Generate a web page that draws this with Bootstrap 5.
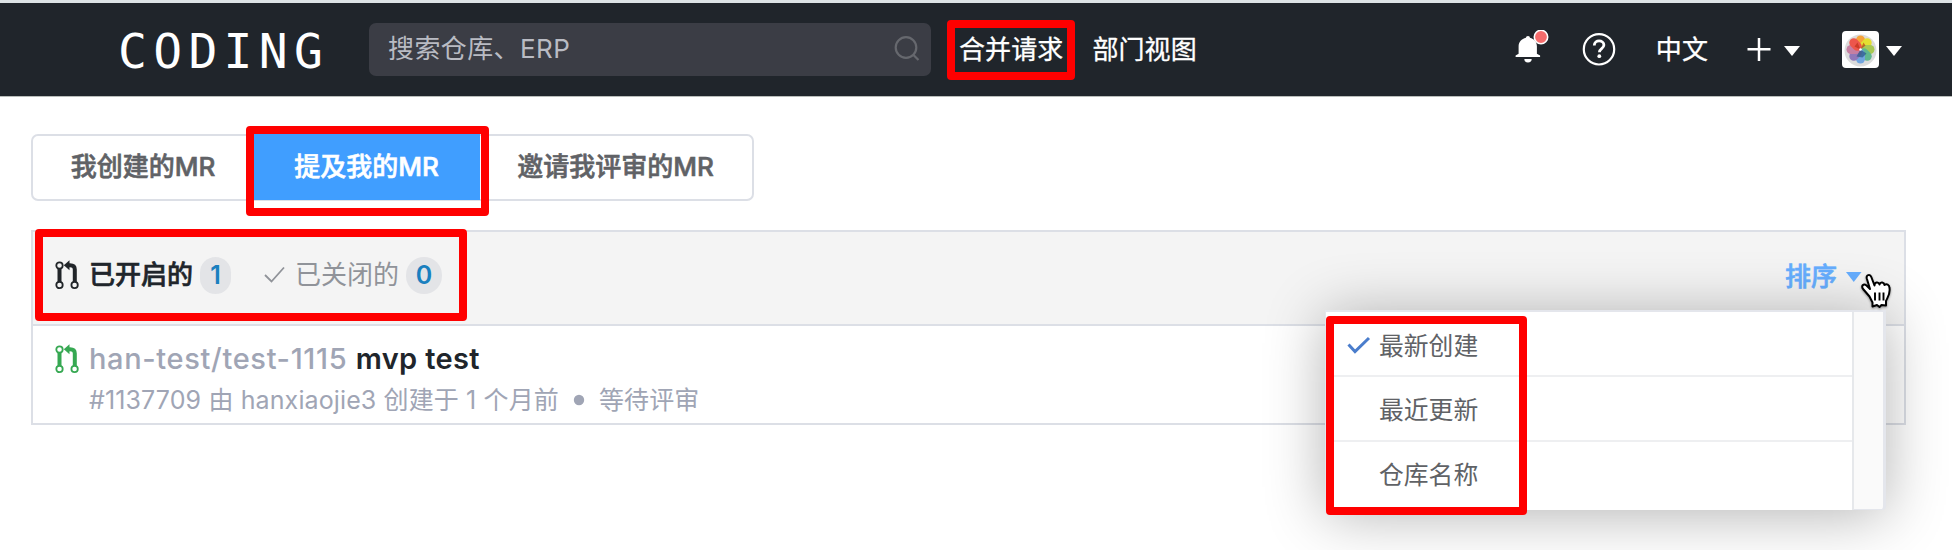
<!DOCTYPE html>
<html lang="zh-CN">
<head>
<meta charset="utf-8">
<title>合并请求 - CODING</title>
<link rel="stylesheet" href="https://cdn.jsdelivr.net/npm/bootstrap@5.3.0/dist/css/bootstrap.min.css">
<style>
  body { font-family: Inter, "Noto Sans CJK SC", sans-serif; font-size: 26px; line-height: 38px; color: #606266; height: 550px; overflow: hidden; letter-spacing: 0; }
  svg { display: block; flex: none; }
  .topbar { height: 97px; background: #20252b; border-top: 3px solid #dde3e6; border-bottom: 1px solid #b9bdba; color: #fff; padding: 0 50px 0 117px; }
  .topbar a { color: #fff; text-decoration: none; white-space: nowrap; -webkit-text-stroke: .3px; letter-spacing: .1px; }
  .brand { font-family: "DejaVu Sans Mono", monospace; font-size: 48px; letter-spacing: 6.3px; width: 252px; line-height: 60px; padding: 3px 0 0 1px; }
  .search-box { width: 562px; height: 53px; margin-bottom: 1px; background: #3b3d45; border-radius: 7px; color: #b9bbc3; padding: 0 11px 0 19px; letter-spacing: .4px; }
  .marked { position: relative; }
  .marked::after { content: ""; position: absolute; border: 8px solid #f00; border-radius: 4px; inset: var(--mark); pointer-events: none; z-index: 5; }
  .avatar { width: 37px; height: 37px; background: #fff; border-radius: 4px; }
  .medium { font-weight: 500; -webkit-text-stroke: .6px; }
  .tabs { width: 723px; height: 67px; margin: 37px 0 0 31px; border: 2px solid #dcdfe6; border-radius: 7px; }
  .tabs > div { height: 66px; margin-top: -2px; padding-right: 1px; display: flex; align-items: center; justify-content: center; white-space: nowrap; }
  .tabs .current { background: #409eff; color: #fff; }
  .panel { width: 1875px; height: 195px; margin: 29px 0 0 31px; border: 2px solid #dcdfe6; position: relative; }
  .panel-top { height: 94px; background: #f4f4f4; border-bottom: 2px solid #dcdfe6; }
  .state-group { width: 432px; height: 92px; margin: -3px 0 0 2px; padding: 0 0 0 20px; --mark: 0; }
  .count { background: #e3e4e7; color: #1a80bf; font-weight: 600; font-size: 25px; height: 37px; border-radius: 19px; line-height: 37px; text-align: center; }
  .mr-title { font-size: 29px; font-weight: 500; line-height: 36px; color: #a0a5b5; letter-spacing: .65px; }
  .mr-title b { font-weight: 600; color: #20252b; letter-spacing: .35px; }
  .mr-meta { font-size: 25px; line-height: 34px; color: #a0a5b5; white-space: nowrap; letter-spacing: .12px; }
  .sort { color: #66aeff; }
  .sort-menu { position: absolute; left: 1292px; top: 78px; width: 561px; height: 200px; background: #fafafa; border: 2px solid #e4e6ec; border-width: 2px 3px 1px 1px; box-shadow: 0 5px 60px rgba(0,0,0,.3); border-radius: 0 0 4px 0; }
  .sort-list { width: 528px; background: #fff; border-right: 2px solid #e6e8eb; --mark: 4px 325px -5px 0; font-size: 24.8px; }
  .sort-list > div { height: 64.6px; padding: 4px 0 0 21px; }
  .sort-list > div:first-child { height: 63px; }
  .sort-list > div:last-child { height: 70px; padding-bottom: 5px; }
  .sort-list > div + div { border-top: 2px solid #eeeff1; }
  .pointer { position: absolute; left: 1824px; top: 40px; z-index: 6; filter: drop-shadow(0 1px 1px rgba(0,0,0,.4)); }
</style>
</head>
<body class="bg-white">
<svg width="0" height="0" class="position-absolute">
  <symbol id="pr" viewBox="0 0 24 30">
    <g fill="none" stroke="currentColor">
      <circle cx="4.5" cy="5.5" r="3.2" stroke-width="1.8"/><circle cx="4.5" cy="25" r="3.2" stroke-width="1.8"/><circle cx="19.6" cy="25" r="3.2" stroke-width="1.8"/>
      <path d="M4.5 8.5v13.5M19.8 22V9.5Q19.8 5.2 15 5.2H13" stroke-width="4"/>
    </g>
    <path d="M8.8 5.2 14.5.3v10z" fill="currentColor"/>
  </symbol>
</svg>

<header class="topbar d-flex align-items-center">
  <div class="brand">CODING</div>
  <div class="search-box d-flex align-items-center justify-content-between">
    <span>搜索仓库、ERP</span>
    <svg width="26" height="26" viewBox="0 0 26 26" fill="none" stroke="#66686e" stroke-width="2.2"><circle cx="12" cy="11.5" r="10.3"/><path d="M19 18.5l5.5 5.5"/></svg>
  </div>
  <a href="#" class="marked" style="--mark:-11px -12px -11px -12px; margin-left:28px">合并请求</a>
  <a href="#" style="margin-left:29px">部门视图</a>
  <div class="d-flex align-items-center ms-auto">
    <svg width="34" height="38" viewBox="0 0 34 38" style="margin-bottom:2px"><path d="M13 6c1.200 0 1.900.8 1.900 1.800 4.300 1 7 4.200 7 8.400v7.500l3.200 1.900v1.300H.6v-1.300l3-1.900v-7.500c0-4.200 3-7.400 7.400-8.400 0-1 .8-1.800 2-1.800z" fill="#fff"/><path d="M9.300 29h7.400a3.700 3.500 0 0 1-7.400 0z" fill="#fff"/><circle cx="26" cy="7.500" r="6.700" fill="#f56c6c" stroke="#fff" stroke-width="1.600" transform="translate(0 -.500)"/></svg>
    <svg style="margin-left:33px" width="34" height="34" viewBox="0 0 34 34" fill="none" stroke="#fff"><circle cx="17" cy="16.300" r="15.200" stroke-width="2.200"/><path d="M12.300 12.500c0-6.200 9.600-5.800 9.600-.4 0 3.600-4.500 3.500-4.500 7.200" stroke-width="2.800"/><circle cx="17.300" cy="23.200" r="1.900" fill="#fff" stroke="none"/></svg>
    <a href="#" style="margin-left:40px">中文</a>
    <svg style="margin-left:39px" width="24" height="24" viewBox="0 0 24 24" stroke="#fff" stroke-width="2.500"><path d="M12 0v23M.500 11.300h23"/></svg>
    <svg style="margin:2px 0 0 13px" width="16" height="10"><path d="M0 0h16L8 10z" fill="#fff"/></svg>
    <div class="avatar d-flex align-items-center justify-content-center" style="margin-left:42px">
      <svg width="35" height="35" viewBox="-17.500 -17.500 35 35"><circle cy="1" r="16" fill="#dcdcdc"/><g opacity=".86">
        <rect x="-4.500" y="-14" width="9" height="14" rx="4.500" fill="#fb9a20"/>
        <rect x="-4.500" y="-14" width="9" height="14" rx="4.500" fill="#e6e016" transform="rotate(45)"/>
        <rect x="-4.500" y="-14" width="9" height="14" rx="4.500" fill="#a0c63d" transform="rotate(90)"/>
        <rect x="-4.500" y="-14" width="9" height="14" rx="4.500" fill="#4bb283" transform="rotate(135)"/>
        <rect x="-4.500" y="-14" width="9" height="14" rx="4.500" fill="#609de0" transform="rotate(180)"/>
        <rect x="-4.500" y="-14" width="9" height="14" rx="4.500" fill="#8468b4" transform="rotate(225)"/>
        <rect x="-4.500" y="-14" width="9" height="14" rx="4.500" fill="#c37099" transform="rotate(270)"/>
        <rect x="-4.500" y="-14" width="9" height="14" rx="4.500" fill="#f04135" transform="rotate(315)"/></g>
        <path d="M0 0-6-3-3-7zM0 0 3-7 5-4z" fill="#b52b10" opacity=".6"/><path d="M0 0 6 4 2 8-4 7z" fill="#285984" opacity=".7"/><circle r="1.300" fill="#fff"/></svg>
    </div>
    <svg style="margin:2px 0 0 7px" width="16" height="10"><path d="M0 0h16L8 10z" fill="#fff"/></svg>
  </div>
</header>

<nav class="tabs medium d-flex">
  <div style="width:221px"><span>我创建的MR</span></div>
  <div class="current marked" style="width:226px; --mark:-8px -9px -16px -8px">提及我的MR</div>
  <div style="width:272px">邀请我评审的MR</div>
</nav>

<main class="panel">
  <div class="panel-top d-flex justify-content-between">
    <div class="state-group marked d-flex align-items-center">
      <svg width="24" height="30" class="text-dark"><use href="#pr"/></svg>
      <span class="medium" style="margin-left:10px; color:#20252b">已开启的</span>
      <span class="count" style="width:31px; margin-left:7px">1</span>
      <svg style="margin-left:33px" width="22" height="18" fill="none" stroke="#909399" stroke-width="1.800"><path d="M1 9l6.500 6.500L20 1.500"/></svg>
      <span style="margin-left:9px; color:#909399">已关闭的</span>
      <span class="count" style="width:36px; margin-left:7px">0</span>
    </div>
    <div class="sort medium d-flex align-items-center" style="margin-right:42px; padding-bottom:2px">排序
      <svg style="margin-left:9px" width="16" height="10"><path d="M0 0h15.500L7.750 10z" fill="#66aeff"/></svg>
    </div>
  </div>
  <div class="d-flex" style="padding:15px 0 0 22px">
    <svg width="24" height="30" style="color:#36a852; margin-top:3px"><use href="#pr"/></svg>
    <div style="margin-left:10px">
      <div class="mr-title"><span>han-test/test-1115</span> <b>mvp test</b></div>
      <div class="mr-meta d-flex align-items-center" style="margin-top:6px"><span>#1137709 由 hanxiaojie3 创建于 1 个月前</span><svg style="margin:0 14px 0 14px" width="12" height="12"><circle cx="6" cy="6" r="5.200" fill="#a0a5b5"/></svg><span>等待评审</span></div>
    </div>
  </div>
  <div class="sort-menu">
    <div class="sort-list marked">
      <div class="d-flex align-items-center"><svg width="24" height="18" fill="none" stroke="#4a7dcc" stroke-width="3" style="margin-bottom:2px"><path d="M1.500 8.500l6.500 7L22 2"/></svg><span style="margin-left:8px">最新创建</span></div>
      <div class="d-flex align-items-center"><span style="margin-left:32px">最近更新</span></div>
      <div class="d-flex align-items-center"><span style="margin-left:32px">仓库名称</span></div>
    </div>
  </div>
  <svg class="pointer" width="38" height="40" viewBox="0 0 38 40"><path d="M12.500 24.500 6.500 17.500C3.500 14 6.500 11 9.500 13.500L13 17 9.800 6.500C8.800 2.500 13.200 2 14.300 5L17.500 13.500C17.500 10 21.500 9.500 22.500 12.500 23.500 9.500 27 10.200 27.500 13 29.500 11.500 32.500 12.500 32.500 16 33.500 22 30.500 25.500 29 29V33.500L24.500 33 22.500 35 20 33 15.500 34.500V30.500Z" fill="#fff" stroke="#000" stroke-width="2" stroke-linejoin="round"/><path d="M18 20.500v8M22.500 20.500v8M26.500 20.500v8" stroke="#000" stroke-width="1.900"/></svg>
</main>
<script src="https://cdn.jsdelivr.net/npm/bootstrap@5.3.0/dist/js/bootstrap.bundle.min.js"></script>
</body>
</html>
